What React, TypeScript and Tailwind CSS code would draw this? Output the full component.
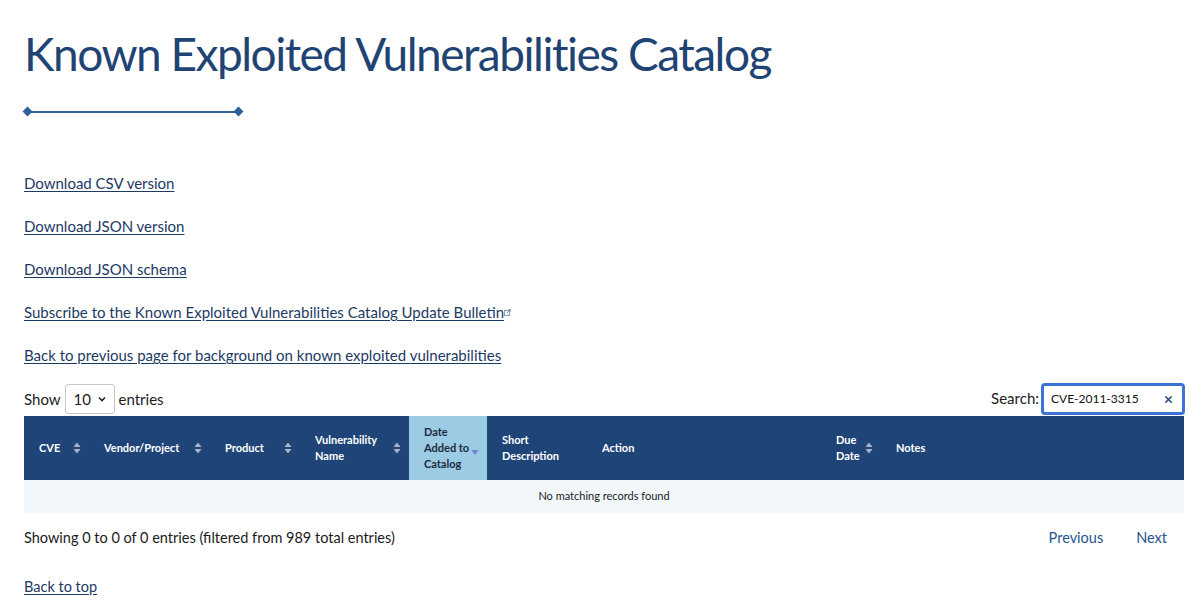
import { X } from 'lucide-react';

const font = { fontFamily: 'Lato, "Liberation Sans", sans-serif' };

function SortIcon({ active = false }: { active?: boolean }) {
  if (active) {
    return (
      <svg width="8" height="10" viewBox="0 0 8 10" className="mt-[8px] shrink-0">
        <path d="M0.5 3 L7.5 3 L4 8 Z" fill="#7a80d6" />
      </svg>
    );
  }
  return (
    <svg width="8" height="12" viewBox="0 0 8 12" className="shrink-0">
      <path d="M0.5 5 L7.5 5 L4 0.5 Z" fill="#a7b4c8" />
      <path d="M0.5 7 L7.5 7 L4 11.5 Z" fill="#a7b4c8" />
    </svg>
  );
}

const columns = [
  { label: ['CVE'], w: 'w-[65px]', sort: true },
  { label: ['Vendor/Project'], w: 'w-[121px]', sort: true },
  { label: ['Product'], w: 'w-[90px]', sort: true },
  { label: ['Vulnerability', 'Name'], w: 'w-[109px]', sort: true },
  { label: ['Date', 'Added to', 'Catalog'], w: 'w-[78px]', sort: true, active: true },
  { label: ['Short', 'Description'], w: 'w-[100px]', sort: false },
  { label: ['Action'], w: 'w-[234px]', sort: false },
  { label: ['Due', 'Date'], w: 'w-[60px]', sort: true },
  { label: ['Notes'], w: '', sort: false },
];

const links = [
  'Download CSV version',
  'Download JSON version',
  'Download JSON schema',
];

export default function App() {
  return (
    <div className="min-h-screen bg-white pl-6 pr-4 text-[#1b1b1b]" style={font}>
      <h1 className="pt-[24px] text-[46px] leading-[60px] tracking-[-1.5px] text-[#1f4474]">
        Known Exploited Vulnerabilities Catalog
      </h1>

      {/* decorative rule */}
      <div className="mt-[24px] flex w-[218px] items-center">
        <span className="h-[7px] w-[7px] rotate-45 bg-[#2e619a]" />
        <span className="h-[2px] flex-1 bg-[#2e619a]" />
        <span className="h-[7px] w-[7px] rotate-45 bg-[#2e619a]" />
      </div>

      <div className="mt-[56px] flex flex-col gap-[19px] text-[15px] leading-6 text-[#1d3a64]">
        {links.map((l) => (
          <a key={l} href="#" className="w-fit underline underline-offset-2">
            {l}
          </a>
        ))}
        <a href="#" className="flex w-fit items-start underline underline-offset-2">
          Subscribe to the Known Exploited Vulnerabilities Catalog Update Bulletin
          <svg width="7" height="7" viewBox="0 0 7 7" className="mt-[9px]">
            <rect x="0.5" y="1.5" width="5" height="5" fill="none" stroke="#8d9bb0" strokeWidth="1" />
            <path d="M3 4 L6.5 0.5 M4.5 0.5 H6.5 V2.5" fill="none" stroke="#8d9bb0" strokeWidth="1" />
          </svg>
        </a>
        <a href="#" className="w-fit underline underline-offset-2">
          Back to previous page for background on known exploited vulnerabilities
        </a>
      </div>

      <div className="mt-[16px] flex items-end justify-between">
        <div className="flex items-center gap-1 pb-[1px] text-[15px]">
          <span>Show</span>
          <div className="flex h-[30px] w-[50px] items-center justify-between rounded-[3px] border border-[#c8c8c8] bg-white px-[8px]">
            <span>10</span>
            <svg width="8" height="6" viewBox="0 0 8 6">
              <path d="M1 1.5 L4 4.5 L7 1.5" fill="none" stroke="#222" strokeWidth="1.6" />
            </svg>
          </div>
          <span>entries</span>
        </div>
        <div className="mr-[-1px] flex items-center gap-[2px] text-[15px]">
          <span className="mb-[2px]">Search:</span>
          <div className="flex h-[32px] w-[144px] items-center justify-between rounded-[4px] border-[3px] border-[#3b74d4] bg-white pl-[7px] pr-[8px] text-[12px] text-[#111]">
            <span>CVE-2011-3315</span>
            <X size={11} strokeWidth={3.5} className="text-[#2e4f80]" />
          </div>
        </div>
      </div>

      <table className="mt-[1px] w-full table-fixed border-collapse text-[11px]">
        <colgroup>
          {columns.map((c, i) => (
            <col key={i} className={c.w} />
          ))}
        </colgroup>
        <thead>
          <tr className="h-[64px] bg-[#1f4578] text-left font-bold text-white">
            {columns.map((c, i) => (
              <th
                key={i}
                className={`py-0 pl-[15px] pr-[8px] align-middle leading-[16px] ${
                  c.active ? 'bg-[#9ccbe4] text-[#1b2a3d]' : ''
                }`}
              >
                <div className="flex items-center justify-between">
                  <span>
                    {c.label.map((t) => (
                      <span key={t} className="block">
                        {t}
                      </span>
                    ))}
                  </span>
                  {c.sort && <SortIcon active={c.active} />}
                </div>
              </th>
            ))}
          </tr>
        </thead>
        <tbody>
          <tr className="h-[33px] bg-[#f1f7fb]">
            <td colSpan={9} className="text-center text-[11px] text-[#1b1b1b]">
              No matching records found
            </td>
          </tr>
        </tbody>
      </table>

      <div className="mt-[14px] flex items-center justify-between pr-[17px] text-[14.5px]">
        <span>Showing 0 to 0 of 0 entries (filtered from 989 total entries)</span>
        <div className="flex gap-[33px] text-[#26548f]">
          <span>Previous</span>
          <span>Next</span>
        </div>
      </div>

      <a href="#" className="mt-[27px] block w-fit text-[14.5px] text-[#1d3a64] underline underline-offset-2">
        Back to top
      </a>
    </div>
  );
}
